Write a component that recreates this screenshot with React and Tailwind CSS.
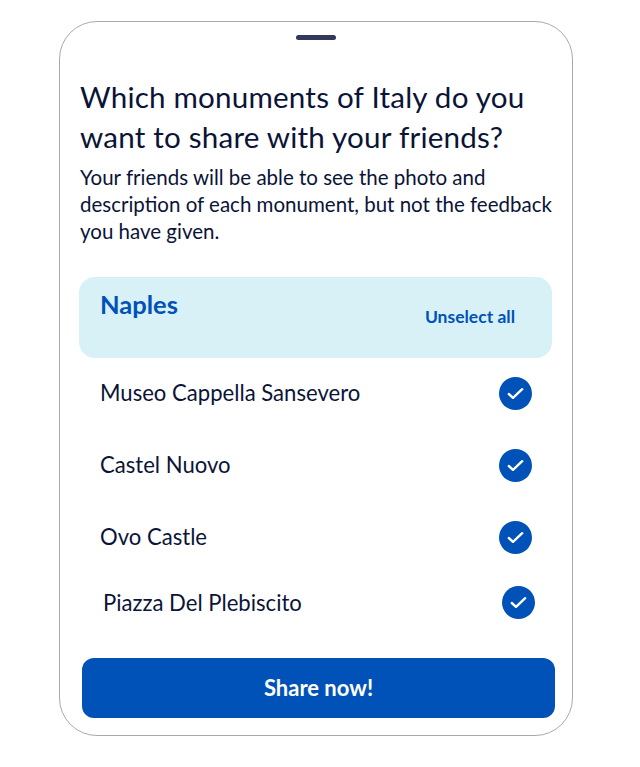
import React from 'react';

const places = [
  { name: 'Museo Cappella Sansevero', rowClass: 'h-[72px] pl-[21px] pr-[21px]' },
  { name: 'Castel Nuovo', rowClass: 'h-[72px] pl-[21px] pr-[21px]' },
  { name: 'Ovo Castle', rowClass: 'h-[72px] pl-[21px] pr-[21px]' },
  // the last row sits a little off in the design
  { name: 'Piazza Del Plebiscito', rowClass: 'h-[59px] pl-[24px] pr-[18px]' },
];

function CheckBadge() {
  return (
    <span className="flex h-[33px] w-[33px] items-center justify-center rounded-full bg-[#0052b8]">
      <svg width="17" height="13" viewBox="0 0 17 13" fill="none">
        <path d="M1.8 7l4.2 3.8L15.2 2.2" stroke="#fff" strokeWidth="2.4" strokeLinecap="round" strokeLinejoin="round" />
      </svg>
    </span>
  );
}

export default function App() {
  return (
    <div className="min-h-[767px] bg-white pl-[59px] pt-[21px] font-['Lato',sans-serif] text-[#0b1437]">
      <div className="h-[715px] w-[514px] rounded-[38px] border border-[#a9a9ad] bg-white pl-[19px]">
        <div className="ml-[217px] mt-[13px] h-[5px] w-[40px] rounded-full bg-[#34385a]" />

        <h1 className="ml-px mt-[37px] w-[470px] text-[29.6px] leading-[40px] tracking-[0.2px]">
          Which monuments of Italy do you want to share with your friends?
        </h1>
        <p className="ml-px mt-[7px] w-[480px] text-[20.5px] leading-[27px]">
          Your friends will be able to see the photo and description of each monument, but not the feedback you have given.
        </p>

        <div className="mt-[32px] flex h-[81px] w-[473px] rounded-[16px] bg-[#d8f1f6] pl-[21px] pr-[37px] text-[#0052b8]">
          <span className="mt-[12px] text-[25.5px] font-bold leading-[30px]">Naples</span>
          <button className="ml-auto mt-[27px] h-[26px] text-[17.5px] font-bold leading-[26px]">Unselect all</button>
        </div>

        <ul className="-mt-px w-[474px]">
          {places.map((place) => (
            <li key={place.name} className={`flex items-center justify-between text-[22.1px] ${place.rowClass}`}>
              {place.name}
              <CheckBadge />
            </li>
          ))}
        </ul>

        <button className="ml-[3px] mt-[26px] h-[60px] w-[473px] rounded-[12px] bg-[#0052b8] pb-[2px] text-[22px] font-bold text-white">
          Share now!
        </button>
      </div>
    </div>
  );
}
